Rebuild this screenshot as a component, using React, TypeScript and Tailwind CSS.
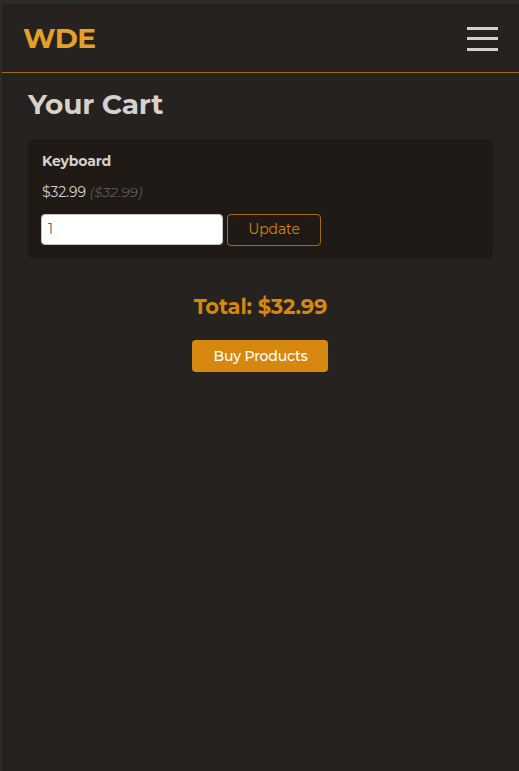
export default function App() {
  return (
    <div className="flex h-[771px] w-[519px] flex-col border-t-4 border-l-2 border-[#2b2b2a] bg-[#262220] font-['Montserrat','Open_Sans',sans-serif] text-[#d7d0cb]">
      <header className="flex h-[69px] items-center justify-between border-b border-[#a5690f] pr-[21px] pl-[21px]">
        <a className="text-[28px] leading-9 font-bold tracking-[-0.5px] text-[#e5a02a]">WDE</a>
        <button aria-label="Menu" className="flex w-[31px] flex-col gap-[7.5px] pt-px">
          <span className="h-[3px] w-full bg-[#d7d0cb]" />
          <span className="h-[3px] w-full bg-[#d7d0cb]" />
          <span className="h-[3px] w-full bg-[#d7d0cb]" />
        </button>
      </header>
      <main className="flex flex-col px-[26px] pt-[13px]">
        <h1 className="text-[28px] leading-9 font-bold tracking-[-0.2px]">Your Cart</h1>
        <article className="mt-[17px] h-[120px] w-[465px] rounded-md bg-[#1f1a16] px-[14px] pt-3">
          <h2 className="text-[14px] leading-5 font-bold tracking-[-0.15px]">Keyboard</h2>
          <p className="mt-[11px] text-[14px] leading-5 tracking-[-0.1px]">
            $32.99 <span className="font-light tracking-normal text-[#746c66] italic">($32.99)</span>
          </p>
          <form className="mt-3 -ml-px flex gap-1">
            <input
              type="number"
              defaultValue={1}
              className="h-[31px] w-[182px] rounded-[4px] border border-[#c9c2bd] bg-white px-[6px] pb-px text-[14px] text-[#625b57] outline-none"
            />
            <button type="button" className="h-[32px] w-[94px] rounded-[4px] border border-[#ab6a0c] pb-[2px] text-[14px] tracking-[-0.1px] text-[#d5870f]">
              Update
            </button>
          </form>
        </article>
        <section className="mt-[34px] flex flex-col items-center">
          <p className="text-[21px] leading-7 font-bold tracking-[-0.15px] text-[#d5870f]">Total: $32.99</p>
          <button className="mt-[19px] mr-px h-8 w-[136px] rounded-[4px] bg-[#d5870f] pl-px text-[14px] font-medium tracking-[-0.15px] text-white">Buy Products</button>
        </section>
      </main>
    </div>
  );
}
